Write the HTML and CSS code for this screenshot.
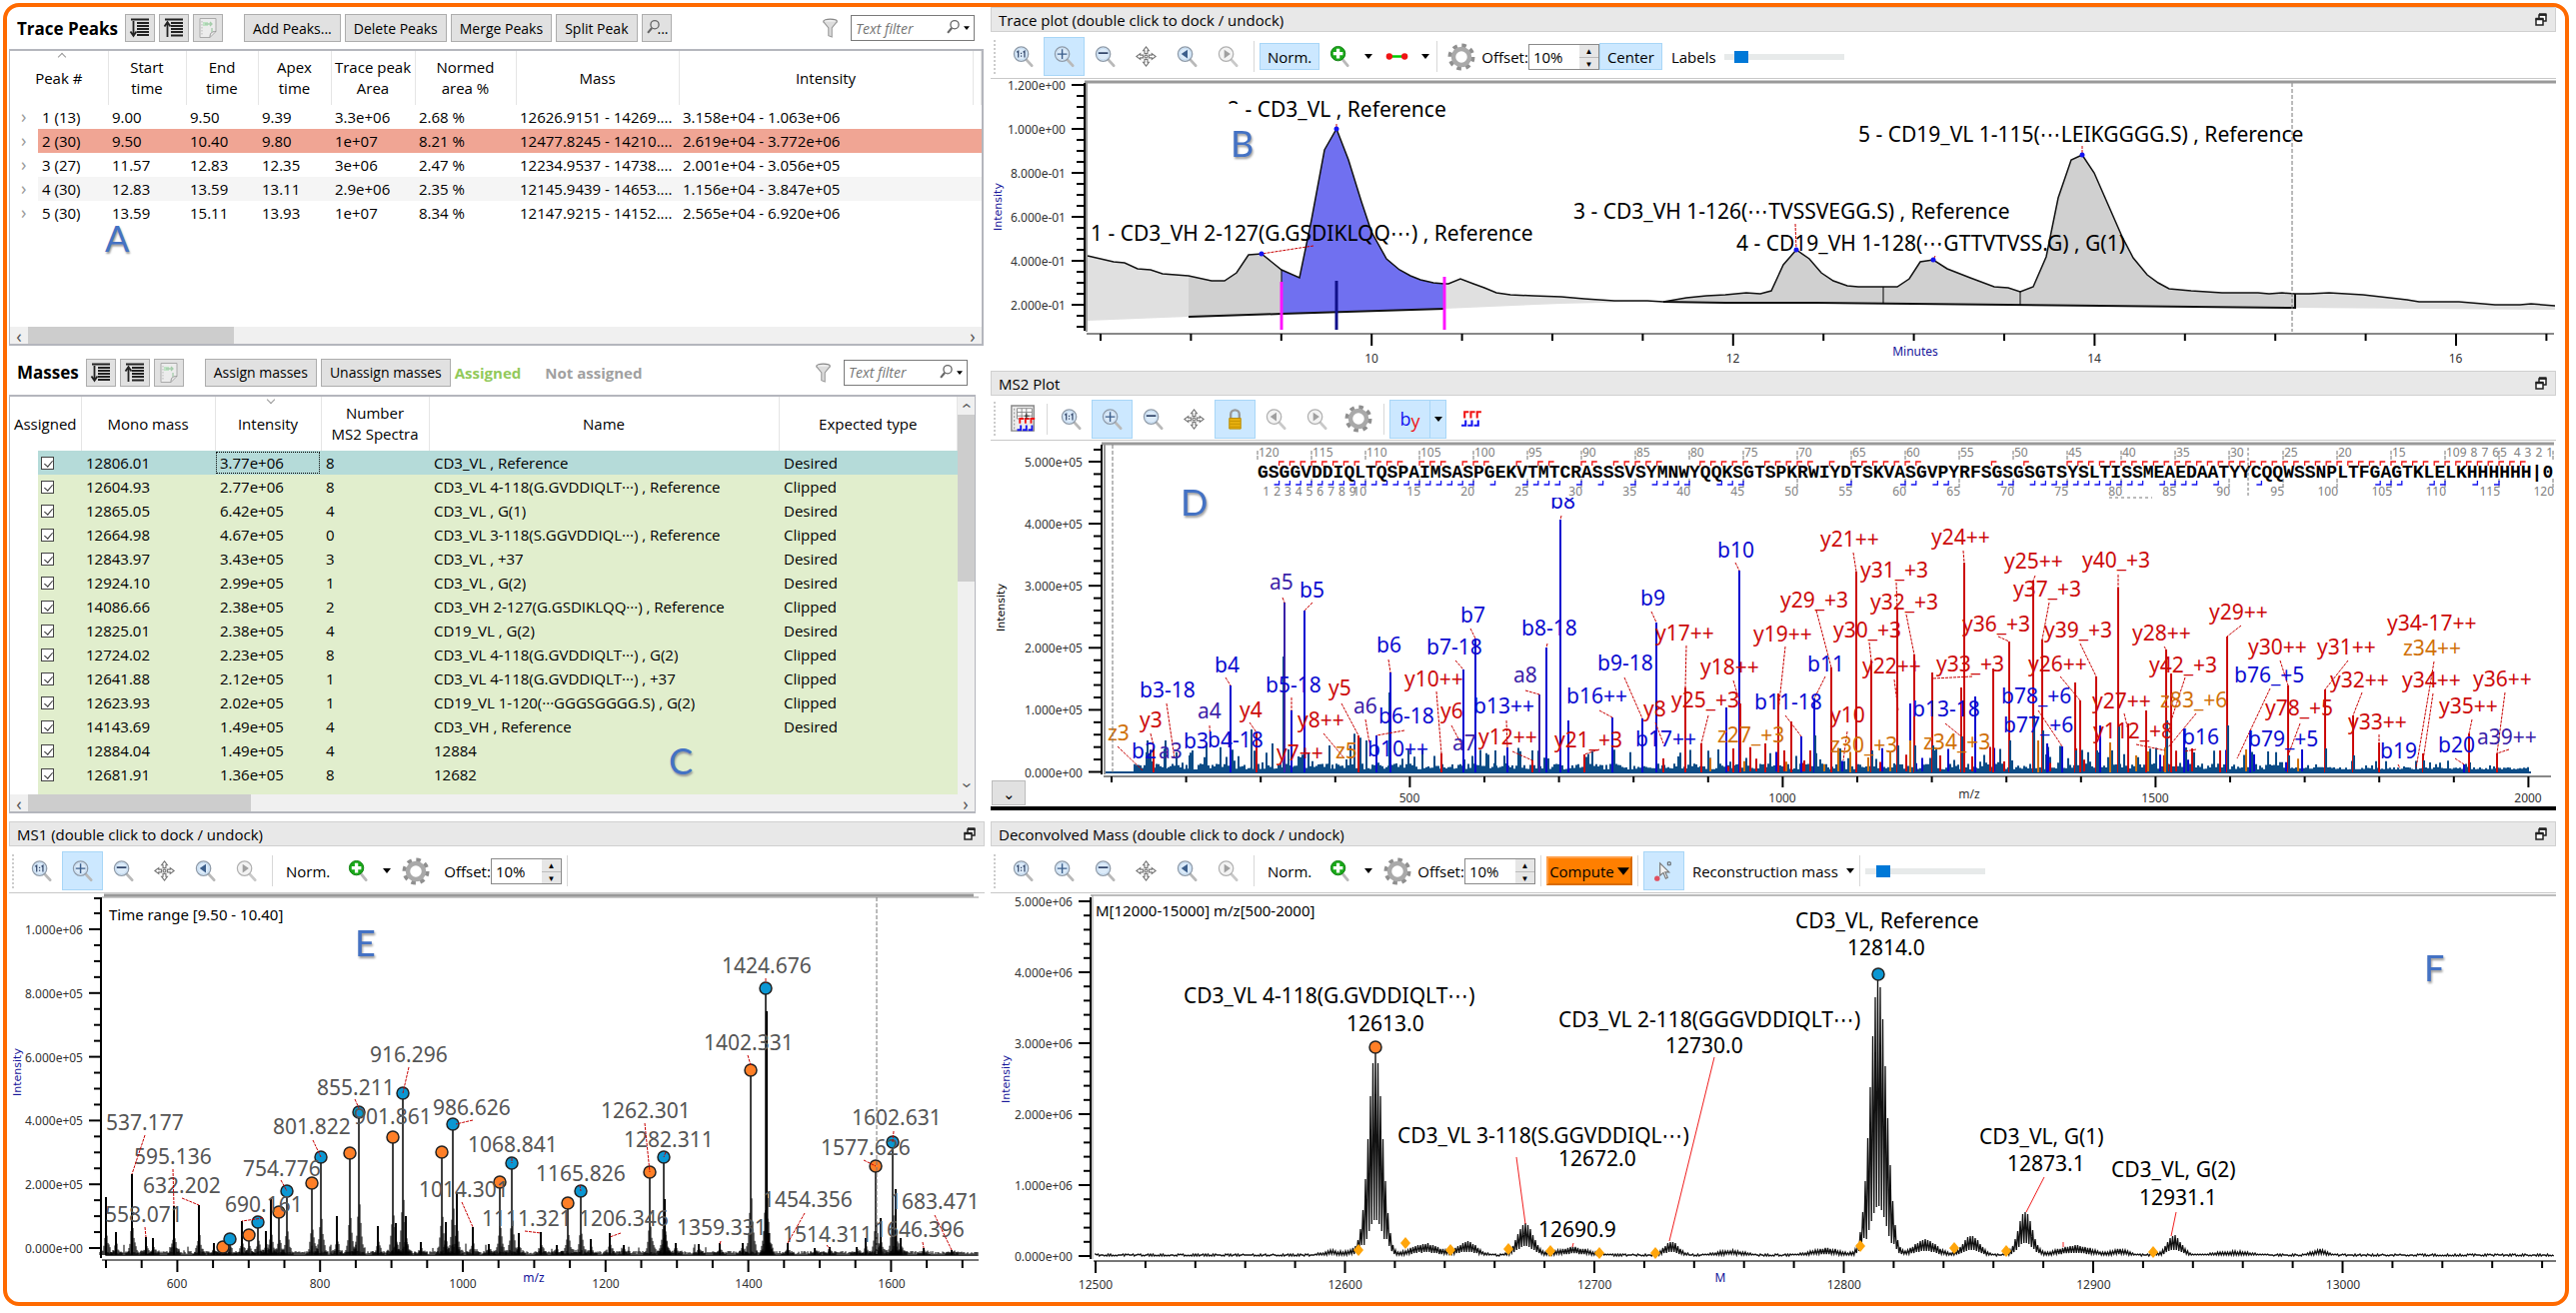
FILE: index.html
```html
<!DOCTYPE html>
<html lang="en">
<head>
    <meta charset="UTF-8">
    <meta name="viewport" content="width=device-width, initial-scale=1.0">
    <title>Peak Viewer</title>
    <link rel="stylesheet" href="styles.css">
</head>
<body>
    <svg class="defs" aria-hidden="true">
        <symbol id="lens" viewBox="0 0 24 24">
            <path d="M15.500 15.500 21 21.500" stroke="#b9b9b9" stroke-width="3" stroke-linecap="round"/>
            <circle cx="10" cy="9.500" r="7.500" fill="#dcebf9" stroke="#8e9aa8" stroke-width="1.300"/>
            <circle cx="10" cy="9.500" r="6" fill="none" stroke="#c3daf0"/>
        </symbol>
        <symbol id="lens-off" viewBox="0 0 24 24">
            <path d="M15.500 15.500 21 21.500" stroke="#c9c9c9" stroke-width="3" stroke-linecap="round"/>
            <circle cx="10" cy="9.500" r="7.500" fill="#f3f3f3" stroke="#b0b0b0" stroke-width="1.300"/>
        </symbol>
        <symbol id="one" viewBox="0 0 24 24">
            <use href="#lens"/>
            <path d="M5.500 7.500 7 6.500V13M12 7.500l1.500-1V13M10 8v1.300M10 11v1.300" fill="none" stroke="#33476b" stroke-width="1.300"/>
        </symbol>
        <symbol id="plus" viewBox="0 0 24 24">
            <use href="#lens"/>
            <path d="M5 9.500h10M10 4.500v10" stroke="#3c5f8c" stroke-width="1.500"/>
        </symbol>
        <symbol id="minus" viewBox="0 0 24 24">
            <use href="#lens"/>
            <path d="M5 8.500h10" stroke="#33476b" stroke-width="1.800"/>
        </symbol>
        <symbol id="move" viewBox="0 0 24 24">
            <g fill="#fff" stroke="#777" stroke-width="1.200">
                <path d="M12 2l3 4h-1.500v3h-3V6H9zM12 22l3-4h-1.500v-3h-3v3H9zM2 12l4-3v1.500h3v3H6V15zM22 12l-4-3v1.500h-3v3h3V15z"/>
                <circle cx="12" cy="12" r="1.500"/>
            </g>
        </symbol>
        <symbol id="prev" viewBox="0 0 24 24">
            <use href="#lens"/>
            <path d="M12.500 5v9L6 9.500z" fill="#3c5f8c"/>
        </symbol>
        <symbol id="prev-off" viewBox="0 0 24 24">
            <use href="#lens-off"/>
            <path d="M12.500 5v9L6 9.500z" fill="#a0a0a0"/>
        </symbol>
        <symbol id="next" viewBox="0 0 24 24">
            <use href="#lens-off"/>
            <path d="M8 5v9l6.500-4.500z" fill="#a0a0a0"/>
        </symbol>
        <symbol id="add" viewBox="0 0 24 24">
            <path d="M15 15.500 20 21.500" stroke="#b9b9b9" stroke-width="3" stroke-linecap="round"/>
            <circle cx="10" cy="9" r="7.500" fill="#18a818" stroke="#128012"/>
            <path d="M10 4v10M5 9h10" stroke="#fff" stroke-width="3.500"/>
        </symbol>
        <symbol id="gear" viewBox="0 0 28 28">
            <circle cx="14" cy="14" r="11.500" fill="none" stroke="#8f8f8f" stroke-width="4" stroke-dasharray="4.500 4.530"/>
            <circle cx="14" cy="14" r="8" fill="none" stroke="#a9a9a9" stroke-width="4.500"/>
        </symbol>
        <symbol id="link" viewBox="0 0 24 10">
            <path d="M3 5h18" stroke="#0c0" stroke-width="2.500"/>
            <circle cx="4" cy="5" r="3.300" fill="#f01414"/>
            <circle cx="20" cy="5" r="3.300" fill="#f01414"/>
        </symbol>
        <symbol id="lock" viewBox="0 0 24 24">
            <path d="M7.500 12V7a4.500 4.500 0 0 1 9 0v5" fill="none" stroke="#999" stroke-width="2.500"/>
            <path d="M6 11h12v11H6z" fill="#e8b010" stroke="#b98a00"/>
            <path d="M6.500 14h11M6.500 17h11M6.500 20h11" stroke="#c79400"/>
        </symbol>
        <symbol id="ions" viewBox="0 0 22 18">
            <path d="M4 8V2h4M10 8V2h4M16 8V2h4" fill="none" stroke="#f01414" stroke-width="2"/>
            <path d="M5 10v5H1M11 10v5H7M17 10v5h-4" fill="none" stroke="#1414f0" stroke-width="2"/>
        </symbol>
        <symbol id="grid" viewBox="0 0 28 30">
            <path d="M1 1h24v27H1z" fill="#ececec" stroke="#888" stroke-width="1.500"/>
            <path d="M7 4h16v11H7z" fill="#fff"/>
            <path d="M7 4h16v11H7zM7 8h16M7 12h16M12 4v11M17 4v11" fill="none" stroke="#888"/>
            <path d="M4 4v22" stroke="#888" stroke-dasharray="2 2"/>
            <path d="M10 20v-5h4M16 20v-5h4M22 20v-5h4" fill="none" stroke="#f01414" stroke-width="2"/>
            <path d="M11 22v5H7M17 22v5h-4M23 22v5h-4" fill="none" stroke="#1414f0" stroke-width="2"/>
            <path d="M17 9v6M15 12h5" stroke="#222"/>
        </symbol>
        <symbol id="down-list" viewBox="0 0 22 22">
            <path d="M2 2.500h18M8 6h12M8 9h12M8 12h12M8 15h12M8 18h12" stroke="#222" stroke-width="1.800"/>
            <path d="M4.500 4v14M1.500 14.500l3 4.500 3-4.500" fill="none" stroke="#222" stroke-width="1.800"/>
        </symbol>
        <symbol id="up-list" viewBox="0 0 22 22">
            <path d="M2 2.500h18M8 6h12M8 9h12M8 12h12M8 15h12M8 18.500h12" stroke="#222" stroke-width="1.800"/>
            <path d="M4.500 20V6M1.500 9.500 4.500 5l3 4.500" fill="none" stroke="#222" stroke-width="1.800"/>
        </symbol>
        <symbol id="sheet" viewBox="0 0 22 22">
            <path d="M3 1.500h16v13L13 20.500H3z" fill="#ececec" stroke="#aaa"/>
            <path d="M13 20.500c0-4 1-6 6-6" fill="none" stroke="#999"/>
            <path d="M6 5h5v4H6z" fill="#bfe3c4"/>
            <path d="M5 4v14" stroke="#bbb" stroke-dasharray="1.500 1.500"/>
            <path d="M8 7h7M13 5l2 2-2 2M15 11v4" fill="none" stroke="#a5cdab" stroke-width="1.300"/>
        </symbol>
        <symbol id="find" viewBox="0 0 22 22">
            <circle cx="11" cy="7" r="5" fill="none" stroke="#666" stroke-width="1.600"/>
            <path d="M7.500 11 2.500 17" stroke="#666" stroke-width="2.600"/>
        </symbol>
        <symbol id="funnel" viewBox="0 0 20 24">
            <ellipse cx="10" cy="4" rx="8" ry="2.500" fill="#eee" stroke="#888" stroke-width="1.300"/>
            <path d="M2 4.500 8 12v9l4 1.500V12l6-7.500" fill="#ddd" stroke="#999" stroke-width="1.300"/>
        </symbol>
        <symbol id="dock" viewBox="0 0 14 14">
            <path d="M5 2h7v6H5z" fill="#fff" stroke="#222" stroke-width="1.500"/>
            <path d="M5 1.500h7.500" stroke="#222" stroke-width="2.500"/>
            <path d="M2 6h7v6H2z" fill="#fff" stroke="#222" stroke-width="1.500"/>
            <path d="M1.500 6h8" stroke="#222" stroke-width="2.500"/>
        </symbol>
        <symbol id="pick" viewBox="0 0 24 24">
            <path d="M8 4v13l3.500-3 2.500 6 2-1-2.500-5.500h4z" fill="#f3f3f3" stroke="#777" stroke-width="1.200"/>
            <path d="M16 3h3v3h-3z" fill="none" stroke="#555"/>
            <circle cx="5" cy="20" r="2.800" fill="#e05060"/>
        </symbol>
        <symbol id="drop" viewBox="0 0 8 5">
            <path d="M0 0h8L4 5z"/>
        </symbol>
    </svg>

    <main class="frame">
        <div class="column">
            <section class="list">
                <span class="letter letter-a">A</span>
                <div class="list-bar">
                    <h2>Trace Peaks</h2>
                    <button class="square" aria-label="Expand"><svg><use href="#down-list"/></svg></button>
                    <button class="square" aria-label="Collapse"><svg><use href="#up-list"/></svg></button>
                    <button class="square last" aria-label="Export"><svg><use href="#sheet"/></svg></button>
                    <button>Add Peaks...</button>
                    <button>Delete Peaks</button>
                    <button>Merge Peaks</button>
                    <button>Split Peak</button>
                    <button class="square dots" aria-label="Find"><svg><use href="#find"/></svg>...</button>
                    <svg class="funnel"><use href="#funnel"/></svg>
                    <label class="filter"><input type="text" placeholder="Text filter" aria-label="Text filter"><svg><use href="#find"/></svg><svg class="tiny"><use href="#drop"/></svg></label>
                </div>
                <div class="box peaks">
                    <div class="rows">
                        <table id="peaks">
                            <colgroup><col class="w-peak"><col class="w-start"><col class="w-end"><col class="w-apex"><col class="w-area"><col class="w-norm"><col class="w-mass"><col class="w-int"><col></colgroup>
                            <thead>
                                <tr><th class="sort-up">Peak #</th><th>Start<br>time</th><th>End<br>time</th><th>Apex<br>time</th><th>Trace peak<br>Area</th><th>Normed<br>area %</th><th>Mass</th><th>Intensity</th><th></th></tr>
                            </thead>
                            <tbody></tbody>
                        </table>
                    </div>
                    <div class="hscroll"><i>‹</i><div class="track"><b></b></div><i>›</i></div>
                </div>
            </section>

            <section class="list masses">
                <span class="letter letter-c">C</span>
                <div class="list-bar">
                    <h2>Masses</h2>
                    <button class="square" aria-label="Expand"><svg><use href="#down-list"/></svg></button>
                    <button class="square" aria-label="Collapse"><svg><use href="#up-list"/></svg></button>
                    <button class="square last" aria-label="Export"><svg><use href="#sheet"/></svg></button>
                    <button>Assign masses</button>
                    <button>Unassign masses</button>
                    <span class="green">Assigned</span>
                    <span class="gray">Not assigned</span>
                    <svg class="funnel"><use href="#funnel"/></svg>
                    <label class="filter"><input type="text" placeholder="Text filter" aria-label="Text filter"><svg><use href="#find"/></svg><svg class="tiny"><use href="#drop"/></svg></label>
                </div>
                <div class="box">
                    <div class="with-scroll">
                        <table id="masses">
                            <colgroup><col class="w-check"><col class="w-mono"><col class="w-mint"><col class="w-ms2"><col class="w-name"><col></colgroup>
                            <thead>
                                <tr><th>Assigned</th><th>Mono mass</th><th class="sort-down">Intensity</th><th>Number<br>MS2 Spectra</th><th>Name</th><th>Expected type</th></tr>
                            </thead>
                            <tbody></tbody>
                        </table>
                        <div class="vscroll"><i>‹</i><div class="track"><b></b></div><i>›</i></div>
                    </div>
                    <div class="hscroll"><i>‹</i><div class="track"><b></b></div><i>›</i></div>
                </div>
            </section>
        </div>

        <div class="column">
            <section>
                <header>Trace plot (double click to dock / undock)<button aria-label="Dock"><svg><use href="#dock"/></svg></button></header>
                <div class="tools">
                    <span class="grip"></span>
                    <button aria-label="Zoom 1:1"><svg><use href="#one"/></svg></button>
                    <button class="on" aria-label="Zoom in"><svg><use href="#plus"/></svg></button>
                    <button aria-label="Zoom out"><svg><use href="#minus"/></svg></button>
                    <button aria-label="Pan"><svg><use href="#move"/></svg></button>
                    <button aria-label="Previous"><svg><use href="#prev"/></svg></button>
                    <button aria-label="Next"><svg><use href="#next"/></svg></button>
                    <span class="sep"></span>
                    <button class="text on">Norm.</button>
                    <button aria-label="Add"><svg><use href="#add"/></svg></button>
                    <button class="menu" aria-label="Add menu"><svg class="drop"><use href="#drop"/></svg></button>
                    <button aria-label="Line style"><svg><use href="#link"/></svg></button>
                    <button class="menu" aria-label="Line menu"><svg class="drop"><use href="#drop"/></svg></button>
                    <span class="sep flush"></span>
                    <button aria-label="Settings"><svg class="gear"><use href="#gear"/></svg></button>
                    <label class="offset">Offset:<span class="spin"><input type="text" value="10%"><span><i>▲</i><i>▼</i></span></span></label>
                    <button class="text on">Center</button>
                    <label class="slide">Labels<input type="range" value="10"></label>
                </div>
                <svg class="plot" id="trace" viewBox="0 0 1566 289"></svg>
            </section>

            <section class="ms2">
                <header>MS2 Plot<button aria-label="Dock"><svg><use href="#dock"/></svg></button></header>
                <div class="tools tight">
                    <span class="grip"></span>
                    <button aria-label="Table"><svg class="gear"><use href="#grid"/></svg></button>
                    <span class="sep flush"></span>
                    <button aria-label="Zoom 1:1"><svg><use href="#one"/></svg></button>
                    <button class="on" aria-label="Zoom in"><svg><use href="#plus"/></svg></button>
                    <button aria-label="Zoom out"><svg><use href="#minus"/></svg></button>
                    <button aria-label="Pan"><svg><use href="#move"/></svg></button>
                    <button class="on" aria-label="Lock"><svg><use href="#lock"/></svg></button>
                    <button aria-label="Previous"><svg><use href="#prev-off"/></svg></button>
                    <button aria-label="Next"><svg><use href="#next"/></svg></button>
                    <button aria-label="Settings"><svg class="gear"><use href="#gear"/></svg></button>
                    <span class="sep"></span>
                    <button class="on by"><b>b</b><em>y</em></button>
                    <button class="on menu split" aria-label="Ion menu"><svg class="drop"><use href="#drop"/></svg></button>
                    <button class="ions" aria-label="Ions"><svg><use href="#ions"/></svg></button>
                </div>
                <svg class="plot" id="ms2" viewBox="0 0 1566 366"></svg>
                <button class="fold" aria-label="Fold">⌄</button>
            </section>
        </div>

        <section class="ms1">
            <header>MS1 (double click to dock / undock)<button aria-label="Dock"><svg><use href="#dock"/></svg></button></header>
            <div class="tools">
                <span class="grip"></span>
                <button aria-label="Zoom 1:1"><svg><use href="#one"/></svg></button>
                <button class="on" aria-label="Zoom in"><svg><use href="#plus"/></svg></button>
                <button aria-label="Zoom out"><svg><use href="#minus"/></svg></button>
                <button aria-label="Pan"><svg><use href="#move"/></svg></button>
                <button aria-label="Previous"><svg><use href="#prev"/></svg></button>
                <button aria-label="Next"><svg><use href="#next"/></svg></button>
                <span class="sep"></span>
                <button class="text">Norm.</button>
                <button aria-label="Add"><svg><use href="#add"/></svg></button>
                <button class="menu" aria-label="Add menu"><svg class="drop"><use href="#drop"/></svg></button>
                <button aria-label="Settings"><svg class="gear"><use href="#gear"/></svg></button>
                <label class="offset">Offset:<span class="spin"><input type="text" value="10%"><span><i>▲</i><i>▼</i></span></span></label>
                <span class="sep"></span>
            </div>
            <svg class="plot" id="ms1" viewBox="0 0 976 409"></svg>
        </section>

        <section>
            <header>Deconvolved Mass (double click to dock / undock)<button aria-label="Dock"><svg><use href="#dock"/></svg></button></header>
            <div class="tools">
                <span class="grip"></span>
                <button aria-label="Zoom 1:1"><svg><use href="#one"/></svg></button>
                <button aria-label="Zoom in"><svg><use href="#plus"/></svg></button>
                <button aria-label="Zoom out"><svg><use href="#minus"/></svg></button>
                <button aria-label="Pan"><svg><use href="#move"/></svg></button>
                <button aria-label="Previous"><svg><use href="#prev"/></svg></button>
                <button aria-label="Next"><svg><use href="#next"/></svg></button>
                <span class="sep"></span>
                <button class="text">Norm.</button>
                <button aria-label="Add"><svg><use href="#add"/></svg></button>
                <button class="menu" aria-label="Add menu"><svg class="drop"><use href="#drop"/></svg></button>
                <button aria-label="Settings"><svg class="gear"><use href="#gear"/></svg></button>
                <label class="offset">Offset:<span class="spin"><input type="text" value="10%"><span><i>▲</i><i>▼</i></span></span></label>
                <span class="sep"></span>
                <button class="compute">Compute<svg><use href="#drop"/></svg></button>
                <span class="sep"></span>
                <button class="on" aria-label="Pick"><svg><use href="#pick"/></svg></button>
                <span class="pulldown"><select aria-label="Mass type"><option>Reconstruction mass</option></select><svg class="drop"><use href="#drop"/></svg></span>
                <span class="sep"></span>
                <label class="slide"><input type="range" value="10" aria-label="Label size"></label>
            </div>
            <svg class="plot" id="deconv" viewBox="0 0 1566 409"></svg>
        </section>
    </main>
    <script src="script.js"></script>
</body>
</html>
```
FILE: styles.css
```css
*{
    box-sizing: border-box;
}
body{
    margin: 0;
    background-color: white;
    font-family: "Open Sans", "Noto Sans", sans-serif;
    font-size: 15px;
    color: black;
}
button, input, select{
    font: inherit;
    color: inherit;
}
i, em{
    font-style: normal;
}
.defs{
    display: none;
}
.frame{
    margin: 3px 7px 7px 3px;
    border: 4px solid #ff6a00;
    border-radius: 16px;
    padding: 0 9px 0 2px;
    display: grid;
    grid-template-columns: 976fr 1566fr;
    gap: 8px 6px;
    overflow: hidden;
}
.frame>*{
    min-width: 0;
}

/* lists */
.list{
    position: relative;
}
.list-bar{
    display: flex;
    align-items: center;
    gap: 4px;
    height: 42px;
    padding: 0 10px 0 8px;
}
.masses .list-bar{
    height: 49px;
    padding: 4px 17px 0 8px;
}
.list-bar h2{
    margin: 0 3px 0 0;
    font-size: 17px;
}
.list-bar button{
    height: 28px;
    padding: 0 8px;
    font-size: 14px;
    border: 1px solid #adadad;
    background-color: #e1e1e1;
    white-space: nowrap;
}
.list-bar .square{
    width: 30px;
    padding: 0 3px;
    display: flex;
    align-items: center;
}
.square svg{
    width: 22px;
    height: 22px;
}
.list-bar .last{
    margin-right: 17px;
}
.dots svg{
    flex: none;
    width: 18px;
    margin-right: -6px;
}
.green, .gray{
    font-weight: bold;
    color: #92c95a;
}
.gray{
    color: #a0a0a0;
    margin-left: 20px;
}
.funnel{
    width: 17px;
    height: 22px;
    margin-left: auto;
    margin-right: 8px;
}
.filter{
    display: flex;
    align-items: center;
    width: 124px;
    height: 26px;
    border: 1px solid #7a7a7a;
    padding: 0 4px;
}
.filter input{
    width: 90px;
    border: 0;
    padding: 0;
    font-size: 14px;
    font-style: italic;
    outline: none;
}
.filter input::placeholder{
    color: #757575;
}
.filter svg{
    width: 18px;
    height: 18px;
    flex: none;
}
.filter .tiny{
    width: 6px;
    height: 4px;
}
.box{
    border: 2px solid #b4b6bd;
    border-left-width: 1px;
    margin-right: 1px;
}
.masses .box{
    margin-right: 9px;
    border-right-width: 1px;
}
.rows{
    min-height: 276px;
}
table{
    width: 100%;
    table-layout: fixed;
    border-collapse: collapse;
}
th{
    height: 54px;
    padding: 0;
    font-weight: normal;
    line-height: 21px;
    border-right: 1px solid #e5e5e5;
    position: relative;
}
td{
    height: 24px;
    padding: 0 4px;
    line-height: 22px;
    white-space: nowrap;
    overflow: hidden;
}
td:first-child{
    padding-left: 32px;
    position: relative;
}
.w-peak{ width: 98px; }
.w-start{ width: 78px; }
.w-end{ width: 72px; }
.w-apex{ width: 73px; }
.w-area{ width: 84px; }
.w-norm{ width: 101px; }
.w-mass{ width: 163px; }
.w-int{ width: 294px; }
.w-check{ width: 71px; }
.w-mono{ width: 134px; }
.w-mint{ width: 106px; }
.w-ms2{ width: 108px; }
.w-name{ width: 350px; }
.sort-up::before, .sort-down::before{
    content: "";
    position: absolute;
    left: 50%;
    top: 3px;
    width: 5px;
    height: 5px;
    border: solid #999;
    border-width: 1px 0 0 1px;
    transform: rotate(45deg);
}
.sort-down::before{
    top: 0;
    transform: rotate(225deg);
}
#peaks th, #peaks .plain{
    background-color: white;
}
.red{
    background: linear-gradient(to right, white 28px, #f0a594 28px);
}
.pale{
    background: linear-gradient(to right, white 28px, #f5f5f5 28px);
}
.chev{
    position: absolute;
    left: 11px;
    top: 0;
    font-size: 18px;
    color: #999;
}
#masses td{
    padding-left: 5px;
}
#masses td:first-child{
    padding-left: 31px;
}
#masses tbody tr{
    background: linear-gradient(to right, white 28px, #e1eecd 28px);
}
#masses tbody .picked{
    background: linear-gradient(to right, white 28px, #b5dbd9 28px);
}
.focus{
    outline: 1px dotted black;
    outline-offset: -2px;
}
input[type=checkbox]{
    appearance: none;
    display: block;
    width: 13px;
    height: 13px;
    margin: 0;
    border: 1px solid #444;
    background-color: white;
}
input[type=checkbox]:checked::before{
    content: "";
    display: block;
    width: 4px;
    height: 7px;
    margin: 1px 0 0 4px;
    border: solid #333;
    border-width: 0 1px 1px 0;
    transform: rotate(40deg);
}
.with-scroll{
    display: flex;
}
.with-scroll table{
    flex: 1;
    margin-bottom: 8px;
    box-shadow: 28px 8px 0 #e1eecd;
    clip-path: inset(0 0 -8px 0);
}
.hscroll, .vscroll{
    display: flex;
    align-items: center;
    height: 17px;
    background-color: #f0f0f0;
    color: #555;
}
.hscroll i, .vscroll i{
    width: 18px;
    line-height: 14px;
    font-size: 18px;
    text-align: center;
}
.track{
    flex: 1;
    height: 100%;
}
.track b{
    display: block;
    width: 22%;
    height: 100%;
    background-color: #cdcdcd;
}
.masses .hscroll .track b{
    width: 24%;
}
.vscroll{
    flex-direction: column;
    width: 17px;
    height: auto;
}
.vscroll i{
    height: 18px;
    transform: rotate(90deg);
}
.vscroll .track{
    width: 100%;
}
.masses .vscroll .track b{
    width: 100%;
    height: 46%;
}
.letter{
    position: absolute;
    z-index: 1;
    font-family: Lato, sans-serif;
    font-size: 36px;
    line-height: 30px;
    color: #4472c4;
    text-shadow: 1px 2px 2px #999;
}
.letter-a{
    left: 96px;
    top: 216px;
}
.letter-c{
    left: 660px;
    top: 400px;
}

/* plot panels */
header{
    display: flex;
    justify-content: space-between;
    align-items: center;
    height: 25px;
    padding: 0 7px;
    background-color: #e8e8e8;
    border: 1px solid #d0d0d0;
}
header button{
    border: 0;
    padding: 0;
    background: none;
    display: flex;
}
header svg{
    width: 14px;
    height: 14px;
}
.tools{
    display: flex;
    align-items: center;
    height: 47px;
    padding-top: 3px;
    border-bottom: 1px solid #c8c8c8;
}
.tools.tight{
    height: 45px;
    padding-top: 2px;
}
.tools button{
    flex: none;
    display: flex;
    align-items: center;
    justify-content: center;
    width: 41px;
    height: 39px;
    padding: 0;
    border: 1px solid transparent;
    background: none;
}
.tools button.on{
    background-color: #cce8ff;
    border-color: #a8d6f7;
}
.tools svg{
    width: 23px;
    height: 23px;
}
.tools .gear{
    width: 28px;
    height: 28px;
}
.tools .drop{
    width: 8px;
    height: 5px;
}
.tools .text{
    width: auto;
    height: 27px;
    padding: 0 7px;
}
.tools .menu{
    width: 16px;
}
.tools .split{
    width: 17px;
    margin-left: -1px;
}
.tools .ions{
    width: 50px;
}
.tools .by{
    font-size: 18px;
    color: #1414f0;
}
.by b{
    font-weight: normal;
}
.by em{
    color: #f01414;
    padding-top: 4px;
}
.grip{
    width: 4px;
    height: 34px;
    margin: 0 5px 0 3px;
    border-left: 2px dotted #ccc;
}
.sep{
    width: 1px;
    height: 31px;
    margin: 0 5px;
    background-color: #d8d8d8;
}
.sep.flush{
    margin: 0 3px;
}
.offset, .slide{
    display: flex;
    align-items: center;
}
.ms1 .offset{
    padding-left: 8px;
}
.spin{
    display: flex;
    width: 71px;
    height: 26px;
    border: 1px solid #8a8a8a;
}
.spin input{
    width: 50px;
    border: 0;
    padding: 0 4px;
    outline: none;
}
.spin span{
    width: 19px;
    background-color: #e6e6e6;
}
.spin i{
    display: block;
    height: 12px;
    font-size: 8px;
    line-height: 12px;
    text-align: center;
}
.spin i+i{
    border-top: 1px solid #bbb;
}
.slide{
    padding-left: 9px;
    gap: 8px;
}
.sep+.slide{
    padding-left: 0;
}
input[type=range]{
    appearance: none;
    width: 120px;
    height: 12px;
    margin: 0;
    background: linear-gradient(#e7eaea, #e7eaea) center/100% 6px no-repeat;
}
input[type=range]::-webkit-slider-thumb{
    appearance: none;
    width: 14px;
    height: 12px;
    background-color: #0078d7;
}
.tools .compute{
    width: 86px;
    height: 29px;
    gap: 3px;
    background-color: #ff7f00;
    border: 2px solid #ff9a3c;
    border-color: #ffa04a #d96c00 #d96c00 #ffa04a;
}
.compute svg{
    width: 12px;
    height: 8px;
}
.pulldown{
    display: flex;
    align-items: center;
    padding-left: 8px;
    gap: 8px;
}
.pulldown select{
    appearance: none;
    border: 0;
    padding: 0;
    background: none;
}
.plot{
    display: block;
    width: 100%;
    height: auto;
    overflow: visible;
    font-family: "Noto Sans", "DejaVu Sans", sans-serif;
}
.ms2{
    margin-top: 3px;
    position: relative;
    border-bottom: 4px solid black;
}
.fold{
    position: absolute;
    left: 1px;
    bottom: 1px;
    width: 34px;
    height: 25px;
    padding: 0;
    line-height: 10px;
    border: 1px solid #bbb;
    background-color: #e1e1e1;
}
.tick{
    font-size: 12px;
    fill: #333;
}
.side{
    font-family: "DejaVu Sans", sans-serif;
    font-size: 11px;
}
.name{
    font-size: 21px;
}
.note{
    font-size: 15px;
}
.big{
    font-family: Lato, sans-serif;
    font-size: 36px;
    fill: #4472c4;
    filter: drop-shadow(1px 2px 1px #999);
}
.seq{
    font-family: "Liberation Mono", monospace;
    font-weight: bold;
    font-size: 18px;
}
.num{
    font-size: 12px;
    fill: #808080;
}
```
FILE: script.js
```js
let peaks = [
    ["1 (13)", "9.00", "9.50", "9.39", "3.3e+06", "2.68 %", "12626.9151 - 14269....", "3.158e+04 - 1.063e+06"],
    ["2 (30)", "9.50", "10.40", "9.80", "1e+07", "8.21 %", "12477.8245 - 14210....", "2.619e+04 - 3.772e+06"],
    ["3 (27)", "11.57", "12.83", "12.35", "3e+06", "2.47 %", "12234.9537 - 14738....", "2.001e+04 - 3.056e+05"],
    ["4 (30)", "12.83", "13.59", "13.11", "2.9e+06", "2.35 %", "12145.9439 - 14653....", "1.156e+04 - 3.847e+05"],
    ["5 (30)", "13.59", "15.11", "13.93", "1e+07", "8.34 %", "12147.9215 - 14152....", "2.565e+04 - 6.920e+06"]
]
let look = ["plain", "red", "plain", "pale", "plain"]
peaks.forEach((row, i) => {
    let tr = document.createElement("tr")
    tr.className = look[i]
    tr.innerHTML = row.map((t, c) => "<td>" + (c == 0 ? '<span class="chev">›</span>' : "") + t + "</td>").join("") + "<td></td>"
    document.querySelector("#peaks tbody").append(tr)
})

let masses = [
    ["12806.01", "3.77e+06", 8, "CD3_VL , Reference", "Desired"],
    ["12604.93", "2.77e+06", 8, "CD3_VL 4-118(G.GVDDIQLT···) , Reference", "Clipped"],
    ["12865.05", "6.42e+05", 4, "CD3_VL , G(1)", "Desired"],
    ["12664.98", "4.67e+05", 0, "CD3_VL 3-118(S.GGVDDIQL···) , Reference", "Clipped"],
    ["12843.97", "3.43e+05", 3, "CD3_VL , +37", "Desired"],
    ["12924.10", "2.99e+05", 1, "CD3_VL , G(2)", "Desired"],
    ["14086.66", "2.38e+05", 2, "CD3_VH 2-127(G.GSDIKLQQ···) , Reference", "Clipped"],
    ["12825.01", "2.38e+05", 4, "CD19_VL , G(2)", "Desired"],
    ["12724.02", "2.23e+05", 8, "CD3_VL 4-118(G.GVDDIQLT···) , G(2)", "Clipped"],
    ["12641.88", "2.12e+05", 1, "CD3_VL 4-118(G.GVDDIQLT···) , +37", "Clipped"],
    ["12623.93", "2.02e+05", 1, "CD19_VL 1-120(···GGGSGGGG.S) , G(2)", "Clipped"],
    ["14143.69", "1.49e+05", 4, "CD3_VH , Reference", "Desired"],
    ["12884.04", "1.49e+05", 4, "12884", ""],
    ["12681.91", "1.36e+05", 8, "12682", ""]
]
masses.forEach((row, i) => {
    let tr = document.createElement("tr")
    if (i == 0) tr.className = "picked"
    tr.innerHTML = '<td><input type="checkbox" checked aria-label="Assigned ' + row[0] + '"></td>' +
        row.map((t, c) => (i == 0 && c == 1 ? '<td class="focus">' : "<td>") + t + "</td>").join("")
    document.querySelector("#masses tbody").append(tr)
})

// drawing helpers
function add(svg, tag, attrs, text) {
    let el = document.createElementNS("http://www.w3.org/2000/svg", tag)
    for (let k in attrs) el.setAttribute(k, attrs[k])
    if (text !== undefined) el.textContent = text
    svg.append(el)
    return el
}
function line(svg, x1, y1, x2, y2, color, width, dash) {
    add(svg, "path", { d: `M${x1} ${y1}L${x2} ${y2}`, stroke: color || "black", "stroke-width": width || 1, "stroke-dasharray": dash || "none" })
}
function text(svg, x, y, str, cls, color, anchor) {
    let a = { x: x, y: y, class: cls }
    if (color) a.fill = color
    if (anchor) a["text-anchor"] = anchor
    return add(svg, "text", a, str)
}
function leaders(svg, list) {
    list.forEach(l => line(svg, l[0], l[1], l[2], l[3], "#c80000", 1, "3 1"))
}
function side(svg, x, y, color) {
    add(svg, "text", { class: "side", "text-anchor": "middle", fill: color, transform: `translate(${x} ${y}) rotate(-90)` }, "Intensity")
}
function yAxis(svg, x, labels, top, step, parts, extra) {
    labels.forEach((l, i) => {
        let y = top + i * step
        line(svg, x - 12, y, x, y, "black", 2)
        text(svg, x - 18, y + 5, l, "tick", null, "end")
        if (i < labels.length - 1) for (let k = 1; k < parts; k++) line(svg, x - 7, y + k * step / parts, x, y + k * step / parts, "black", 2)
    })
    extra.forEach(y => line(svg, x - 7, y, x, y, "black", 2))
}
function xAxis(svg, y, from, to, step, isMajor, major, minor) {
    for (let i = 0; from + i * step <= to; i++) {
        let x = from + i * step
        line(svg, x, y, x, y + (isMajor(i) ? major : minor), "black", 2)
    }
}
// repeatable noise
let seed = 7
function rnd() {
    seed = (seed * 16807) % 2147483647
    return seed / 2147483647
}
let navy = "#14149a"

// trace plot
let svg = document.querySelector("#trace")
let curve = [[97,177],[123,183],[134,184],[147,190],[160,191],[172,195],[198,197],[221,202],[234,202],[246,194],[258,176],[271,175],[281,183],[291,191],[309,199],[321,141],[334,71],[346,50],[358,81],[371,123],[381,153],[396,180],[409,191],[420,197],[430,201],[443,204],[454,205],[458,205],[470,200],[483,205],[494,209],[506,214],[520,216],[543,217],[571,218],[594,220],[624,222],[657,222],[673,223],[696,219],[716,217],[735,216],[756,214],[770,215],[781,212],[793,186],[806,171],[819,180],[831,194],[843,202],[857,207],[868,208],[907,208],[919,200],[930,183],[943,181],[957,190],[980,199],[1004,208],[1018,209],[1030,213],[1043,208],[1056,178],[1068,119],[1081,81],[1092,76],[1104,94],[1118,126],[1132,158],[1143,179],[1157,196],[1168,204],[1179,210],[1201,212],[1232,214],[1268,214],[1279,215],[1292,214],[1305,215],[1319,215],[1339,214],[1373,216],[1417,221],[1429,223],[1469,223],[1505,226],[1530,226],[1541,225],[1565,227]]
function area(from, to, base, color) {
    let pts = curve.filter(p => p[0] >= from && p[0] <= to).concat(base)
    add(svg, "polygon", { points: pts.join(" "), fill: color })
}
area(97, 1565, [[1565,231],[1305,229],[735,224],[652,223],[571,225],[454,230],[198,238],[97,242]], "#e0e0e0")
area(198, 291, [[291,235],[198,238]], "#d0d0d0")
area(291, 454, [[454,230],[291,235]], "#7070f0")
area(673, 1305, [[1305,229],[1018,226],[735,224]], "#d0d0d0")
add(svg, "polyline", { points: curve.join(" "), fill: "none", stroke: "#111", "stroke-width": 1.5 })
add(svg, "polyline", { points: "198,238 291,235 454,230", fill: "none", stroke: "#111", "stroke-width": 2 })
add(svg, "polyline", { points: "673,223 735,224 827,224 1018,226 1305,229 1305,215", fill: "none", stroke: "#111", "stroke-width": 2 })
line(svg, 893, 208, 893, 225)
line(svg, 1030, 213, 1030, 226)
line(svg, 291, 191, 291, 235)
line(svg, 291, 203, 291, 251, "#ff14ff", 3)
line(svg, 454, 198, 454, 251, "#ff14ff", 3)
line(svg, 346, 202, 346, 251, "#10108a", 3)
line(svg, 1302, 4, 1302, 253, "#777", 1, "4 2")
line(svg, 94, 3, 1566, 3, "#999", 3)
line(svg, 96, 2, 96, 253, "#999", 2)
line(svg, 94, 4, 94, 252, "black", 2)
line(svg, 96, 255, 1564, 255, "#888", 2)
yAxis(svg, 93, ["1.200e+00", "1.000e+00", "8.000e-01", "6.000e-01", "4.000e-01", "2.000e-01"], 6, 44, 4, [237, 248])
xAxis(svg, 255, 110, 1566, 90.4, i => i % 4 == 3, 12, 7)
;["10", "12", "14", "16"].forEach((t, i) => text(svg, 381 + i * 361.5, 284, t, "tick", null, "middle"))
text(svg, 925, 277, "Minutes", "tick", null, "middle").style.fill = navy
side(svg, 11, 128, navy)
text(svg, 237, 38, "2 - CD3_VL , Reference", "name")
add(svg, "rect", { x: 235, y: 25, width: 15, height: 15, fill: "white" })
text(svg, 100, 162, "1 - CD3_VH 2-127(G.GSDIKLQQ⋯) , Reference", "name")
text(svg, 583, 140, "3 - CD3_VH 1-126(⋯TVSSVEGG.S) , Reference", "name")
text(svg, 746, 172, "4 - CD19_VH 1-128(⋯GTTVTVSS.G) , G(1)", "name")
text(svg, 868, 63, "5 - CD19_VL 1-115(⋯LEIKGGGG.S) , Reference", "name")
leaders(svg, [[323,167,271,175],[346,45,346,50],[805,145,806,171],[945,177,943,181],[1092,67,1092,76]])
;[[271,175],[346,50],[806,171],[943,181],[1092,76]].forEach(p => add(svg, "circle", { cx: p[0], cy: p[1], r: 2.5, fill: "#1414f0" }))
text(svg, 240, 78, "B", "big")

// MS2 plot
svg = document.querySelector("#ms2")
let colors = { b: "#0a0ad0", y: "#cc0a0a", a: "#3a22a8", z: "#d07008", n: "#0c4c86" }
for (let x = 144; x < 1540; x += 2) {
    let fade = x < 1300 ? 1 : 0.4
    let h = 3 + rnd() * 6 * fade + (rnd() > 0.8 ? rnd() * 18 * fade : 0) + (x < 560 && rnd() > 0.9 ? rnd() * 36 : 0)
    line(svg, x, 332, x, 332 - h, colors.n, 2)
    if (x > 700 && x < 1320 && rnd() > 0.84) line(svg, x, 332, x, 332 - 6 - rnd() * 22, ["#cc0a0a", "#d07008", "#0a0ad0"][Math.floor(rnd() * 3)], 2)
}
line(svg, 113, 332, 1541, 332, colors.n, 2)
let ms2Peaks = "n157,300 n175,300 n199,315 n240,305 n261,289 n293,216 n399,252 n376,300 n339,305 n505,310 n570,260 b240,245 a294,162 b314,170 b301,270 b400,232 b485,198 b473,229 b570,79 b556,207 a549,254 b578,280 b666,182 b652,278 b622,277 b749,130 b736,267 y695,247 y266,292 y368,295 b386,295 y163,305 y451,313 b517,307 y542,320 y594,314 y711,303 y750,263 y673,318 y788,253 y775,303 y743,308 y801,281 b811,296 b824,258 y841,227 y866,131 y881,220 y907,168 b920,263 y924,214 y942,232 y971,247 y974,122 b985,256 y1003,228 y1019,201 y1043,140 y1052,199 b1057,303 b1072,306 y1085,242 y1090,260 y1106,236 b1110,285 y1128,147 y1138,283 y1156,270 y1176,209 y1181,233 z1175,307 b1194,288 y1237,196 y1230,310 y1298,245 b1260,290 y1335,249 y1363,275 y1389,302 y1433,313 y1479,293 y1507,313 b1474,324 n825,295 n908,305 n943,305 n972,296 n1020,300 n1044,275 n1053,290 n1086,310 n1107,310 n1129,285 n1177,280 n1238,285 n1336,308 n1299,315 n882,310 n925,305 n1364,315 n1434,320 z920,300 z1120,302 z1048,300 z860,315"
ms2Peaks.split(" ").forEach(p => {
    let xy = p.slice(1).split(",")
    line(svg, xy[0], 332, xy[0], xy[1], colors[p[0]], 2)
})
leaders(svg, [[127,306,152,330],[160,293,163,305],[176,263,184,318],[235,237,240,245],[219,285,220,305],[259,282,266,292],[292,157,294,162],[322,162,314,170],[301,257,301,270],[351,263,368,295],[333,293,354,318],[375,279,379,303],[398,219,400,232],[414,290,386,295],[480,188,485,198],[465,220,473,229],[446,251,451,313],[461,285,470,302],[535,250,549,254],[571,75,570,79],[557,203,556,207],[661,171,666,182],[634,237,652,278],[516,280,517,307],[609,270,622,277],[522,311,542,320],[696,205,695,247],[743,240,750,263],[718,275,711,303],[665,282,673,303],[745,122,749,130],[609,309,594,314],[795,206,788,271],[826,170,841,227],[835,236,824,258],[863,112,866,131],[906,142,907,168],[879,202,881,220],[904,239,908,270],[916,174,924,214],[973,110,974,122],[982,236,942,238],[955,283,971,296],[795,275,811,296],[857,291,853,320],[1008,196,1019,201],[1045,135,1043,140],[1059,162,1052,199],[1128,134,1128,147],[1090,203,1106,236],[1070,236,1090,260],[1048,270,1072,306],[1134,273,1138,290],[1206,273,1178,307],[1146,304,1175,310],[1174,206,1176,209],[1195,237,1181,280],[1206,309,1194,311],[1251,185,1237,196],[1290,220,1298,245],[1280,248,1247,318],[1358,220,1335,249],[1372,252,1363,275],[1310,283,1298,315],[1444,221,1426,328],[1443,253,1433,320],[1515,252,1507,313],[1389,294,1389,302],[1482,279,1479,293],[1465,318,1474,324],[1408,324,1410,328],[1519,309,1507,313]])
let ms2Labels = "z3 117,300 b2 141,318 y3 149,287 a3 168,318 b3 193,308 b3-18 149,257 a4 207,278 b4 224,232 b4-18 217,307 y4 249,277 a5 279,149 b5 309,157 b5-18 275,252 y5 338,255 y7++ 286,320 y8++ 307,287 z5 345,318 a6 363,273 b6 386,212 b6-18 388,283 b7 470,182 b7-18 436,214 b10++ 377,316 y10++ 414,246 y6 450,278 a7 462,310 a8 523,242 b8 560,68 b8-18 531,195 b9 650,165 b9-18 607,230 b13++ 483,273 b16++ 576,263 y12++ 488,304 b10 727,117 y17++ 665,200 y18++ 710,234 y25_+3 681,267 y8 653,276 y21_+3 564,307 b17++ 645,306 z27_+3 727,302 y19++ 763,201 b11-18 764,269 y29_+3 790,167 y21++ 830,106 y31_+3 870,137 b11 817,231 y30_+3 843,197 y22++ 872,233 y32_+3 880,169 y24++ 941,104 y33_+3 946,231 y10 840,282 b13-18 922,276 z30_+3 840,312 z34_+3 933,309 y36_+3 972,191 y25++ 1014,128 y37_+3 1023,156 y40_+3 1092,127 y39_+3 1054,197 y26++ 1038,231 b78_+6 1011,263 b77_+6 1013,292 y27++ 1102,268 z83_+6 1170,267 y112_+8 1103,298 b16 1192,304 y28++ 1142,200 y42_+3 1159,232 y29++ 1219,179 y30++ 1258,214 y31++ 1327,214 b76_+5 1244,242 y78_+5 1275,275 b79_+5 1258,306 y34-17++ 1397,190 z34++ 1413,215 y32++ 1340,247 y34++ 1412,247 y36++ 1483,246 y33++ 1358,289 y35++ 1449,273 b19 1390,318 b20 1448,312 a39++ 1487,304".split(" ")
for (let i = 0; i < ms2Labels.length; i += 2) {
    let xy = ms2Labels[i + 1].split(",")
    text(svg, xy[0], xy[1], ms2Labels[i], "name", colors[ms2Labels[i][0]])
}
line(svg, 111, 3, 1564, 3, "#999", 3)
line(svg, 114, 2, 114, 334, "#999", 2)
line(svg, 111, 4, 111, 334, "black", 2)
line(svg, 113, 336, 1561, 336, "#888", 2)
line(svg, 122, 4, 122, 332, "#777", 1, "4 2")
yAxis(svg, 110, ["5.000e+05", "4.000e+05", "3.000e+05", "2.000e+05", "1.000e+05", "0.000e+00"], 21, 62.1, 5, [9])
xAxis(svg, 336, 121, 1545, 74.6, i => i % 5 == 4, 11, 6)
;["500", "1000", "1500", "2000"].forEach((t, i) => text(svg, 419 + i * 373, 362, t, "tick", null, "middle"))
text(svg, 979, 358, "m/z", "tick", null, "middle")
side(svg, 14, 167, "black")
// sequence strip, one cell is 10.8 wide
add(svg, "rect", { x: 265, y: 8, width: 1300, height: 49, fill: "white" })
function cell(k) { return 267 + k * 10.8 }
for (let k = 0; k <= 120; k += 5) {
    line(svg, cell(k), 10, cell(k), 20, "#777", 1, "4 1")
    if (k > 0) line(svg, cell(k), 38, cell(k), 47, "#777", 1, "4 1")
    text(svg, cell(k) + 1, 16, k == 110 ? "10" : k == 115 ? "5" : k == 120 ? "" : 120 - k, "num")
    if (k > 5) text(svg, cell(k) + 1, 55, k, "num", null, "end")
}
for (let k = 111; k < 120; k++) if (k != 115) text(svg, cell(k) + 4, 16, 120 - k, "num")
for (let k = 1; k < 10; k++) text(svg, cell(k) - 2, 55, k, "num", null, "middle")
text(svg, 267, 37, "GSGGVDDIQLTQSPAIMSASPGEKVTMTCRASSSVSYMNWYQQKSGTSPKRWIYDTSKVASGVPYRFSGSGSGTSYSLTISSMEAEDAATYYCQQWSSNPLTFGAGTKLELKHHHHHH|0", "seq")
let top1 = [2,3,4,5,6,7,8,9,11,12,13,15,16,17,19,20,21,24,26,27,30,31,33,34,35,36,37,41,42,43,44,45,47,48,49,50,51,53,55,56,57,58,59,60,61,68,71]
for (let k = 75; k < 118; k++) top1.push(k)
let bottom1 = [2,3,4,5,6,7,8,9,10,11,12,13,14,15,16,17,18,19,20,22,25,26,27,28,30,32,35,37,38,39,40,43,44,45,55,60,61,63,64,69,70,72,73,74,75,76,77,78,79,80,81,82,84,85,86,87,89,93,104,105,106,109,110,113,115]
top1.forEach(k => add(svg, "path", { d: `M${cell(k)} 25v-4h5`, fill: "none", stroke: "#f01414", "stroke-width": 1.3 }))
bottom1.forEach(k => add(svg, "path", { d: `M${cell(k) - 5} 44h5v-4`, fill: "none", stroke: "#1414f0", "stroke-width": 1.3 }))
line(svg, 1258, 7, 1258, 57, "#777", 1, "3 2")
line(svg, 1119, 57, 1162, 57, "#777", 1, "3 3")
text(svg, 190, 75, "D", "big")

// MS1 plot
svg = document.querySelector("#ms1")
let blue = [[221,346],[249,329],[278,298],[312,264],[350,219],[394,200],[444,231],[503,270],[572,298],[655,264],[757,95],[884,249]]
let orange = [[214,354],[240,342],[270,319],[303,290],[341,260],[384,244],[433,259],[491,289],[559,310],[641,279],[742,177],[867,273]]
let others = [[97,304],[123,281],[107,339],[137,344],[144,345],[165,313],[190,312],[205,350],[233,328],[262,306],[257,338],[328,323],[369,333],[387,330],[397,323],[412,349],[464,334],[437,329],[448,300],[480,351],[532,339],[548,352],[582,346],[601,340],[615,352],[690,351],[711,350],[734,350],[760,340],[779,350],[806,355],[821,354],[848,354],[857,345],[872,325],[887,296],[892,345],[915,355],[943,357],[656,306],[667,350],[758,118],[510,340]]
for (let x = 97; x < 970; x += 1) {
    line(svg, x, 363, x, 361 - rnd() * 3 - (x < 700 && rnd() > 0.9 ? rnd() * 8 : 0), "black", 1)
}
blue.concat(orange, others).forEach(p => {
    line(svg, p[0], 362, p[0], p[1], "black", others.includes(p) ? 2 : 1.5)
    let h = Math.min(362 - p[1], 160)
    for (let d = 1; d < 7; d++) {
        line(svg, p[0] + d, 362, p[0] + d, 362 - h * 0.55 * Math.exp(-d / 2) - rnd() * 4, "black", 1)
        line(svg, p[0] - d, 362, p[0] - d, 362 - h * 0.5 * Math.exp(-d / 1.5) - rnd() * 4, "black", 1)
    }
})
let ms1Labels = "537.177 97,237 595.136 125,271 632.202 134,300 558.071 96,329 690.161 216,319 754.776 234,283 801.822 264,241 855.211 308,202 901.861 345,231 916.296 361,169 986.626 424,222 1014.301 410,304 1068.841 459,259 1165.826 527,288 1111.321 473,333 1206.346 570,333 1262.301 592,225 1282.311 615,254 1402.331 695,157 1424.676 713,80 1359.331 668,342 1454.356 754,314 1514.311 774,349 1577.626 812,262 1602.631 843,232 1683.471 881,316 1646.396 866,344".split(" ")
orange.forEach(p => add(svg, "circle", { cx: p[0], cy: p[1], r: 6, fill: "#ff7f27", stroke: "#222", "stroke-width": 1.5 }))
blue.forEach(p => add(svg, "circle", { cx: p[0], cy: p[1], r: 6, fill: "#0b97d3", stroke: "#222", "stroke-width": 1.5 }))
for (let i = 0; i < ms1Labels.length; i += 2) {
    let xy = ms1Labels[i + 1].split(",")
    text(svg, xy[0], xy[1], ms1Labels[i], "name", "#555")
}
leaders(svg, [[136,242,123,281],[164,276,165,313],[173,305,190,312],[136,334,137,344],[254,325,233,328],[272,287,278,298],[304,247,312,264],[346,206,350,215],[400,174,394,200],[464,227,447,231],[453,309,464,334],[503,265,503,270],[571,292,572,298],[516,338,532,340],[612,340,601,344],[636,230,641,279],[657,259,655,264],[739,162,742,172],[757,85,757,90],[796,320,779,350],[712,348,711,352],[855,267,867,273],[885,238,884,249],[926,322,943,357],[914,349,915,355],[818,352,821,356]])
line(svg, 95, 2, 965, 2, "#999", 3)
line(svg, 93, 4, 970, 4, "#999", 1)
line(svg, 92, 4, 92, 365, "black", 2)
line(svg, 93, 367, 970, 367, "#777", 2)
line(svg, 868, 4, 868, 361, "#777", 1, "4 2")
yAxis(svg, 92, ["1.000e+06", "8.000e+05", "6.000e+05", "4.000e+05", "2.000e+05", "0.000e+00"], 36, 63.8, 4, [5, 20])
xAxis(svg, 367, 97, 970, 35.7, i => i % 4 == 2, 12, 8)
;["600", "800", "1000", "1200", "1400", "1600"].forEach((t, i) => text(svg, 168 + i * 143, 395, t, "tick", null, "middle"))
text(svg, 525, 389, "m/z", "tick", null, "middle").style.fill = navy
side(svg, 12, 179, navy)
text(svg, 100, 27, "Time range [9.50 - 10.40]", "note")
text(svg, 346, 63, "E", "big")

// deconvolved mass plot, every envelope is a bell: centre, height, width
svg = document.querySelector("#deconv")
let bells = [[385,204,7],[435,11,14],[477,13,9],[535,31,8],[583,7,15],[681,13,7],[740,4,12],[341,4,8],[365,5,8],[835,6,14],[888,276,8],[935,15,11],[981,19,8],[1035,43,7],[1085,9,16],[1130,5,8],[1184,19,7],[1245,3,16],[1330,5,7]]
let d = "M105 362"
for (let i = 0; i * 1.25 < 1460; i++) {
    let x = 105 + i * 1.25
    let h = 1 + rnd()
    bells.forEach(b => h += b[1] * Math.exp(-((x - b[0]) ** 2) / (2 * b[2] ** 2)))
    if (i % 2) h = h * (h > 60 ? 0.18 : 0.3)
    d += `L${x} ${Math.round(363 - h)}`
}
add(svg, "path", { d: d, fill: "none", stroke: "#111", "stroke-width": 1.3 })
;[[526,264,535,331],[724,164,679,348],[1054,284,1036,319],[1186,319,1181,343],[583,350,582,354],[1073,349,1073,354]].forEach(l => line(svg, l[0], l[1], l[2], l[3], "#f01e1e", 1))
;[[368,357],[415,350],[460,357],[518,356],[560,358],[609,360],[665,360],[870,353],[964,355],[1016,358],[1163,359]].forEach(p => add(svg, "path", { d: `M${p[0]} ${p[1] - 6}l5 6-5 6-5-6z`, fill: "#ffa50a" }))
add(svg, "circle", { cx: 385, cy: 154, r: 6, fill: "#ff7f27", stroke: "#222", "stroke-width": 1.5 })
add(svg, "circle", { cx: 888, cy: 81, r: 6, fill: "#0b97d3", stroke: "#222", "stroke-width": 1.5 })
text(svg, 193, 110, "CD3_VL 4-118(G.GVDDIQLT⋯)", "name")
text(svg, 356, 138, "12613.0", "name")
text(svg, 568, 134, "CD3_VL 2-118(GGGVDDIQLT⋯)", "name")
text(svg, 675, 160, "12730.0", "name")
text(svg, 407, 250, "CD3_VL 3-118(S.GGVDDIQL⋯)", "name")
text(svg, 568, 273, "12672.0", "name")
text(svg, 548, 344, "12690.9", "name")
text(svg, 805, 35, "CD3_VL, Reference", "name")
text(svg, 857, 62, "12814.0", "name")
text(svg, 989, 251, "CD3_VL, G(1)", "name")
text(svg, 1017, 278, "12873.1", "name")
text(svg, 1121, 284, "CD3_VL, G(2)", "name")
text(svg, 1149, 312, "12931.1", "name")
line(svg, 100, 2, 1566, 2, "#bbb", 2)
line(svg, 102, 2, 102, 366, "#999", 1)
line(svg, 100, 4, 100, 366, "black", 2)
line(svg, 103, 368, 1566, 368, "#777", 2)
yAxis(svg, 100, ["5.000e+06", "4.000e+06", "3.000e+06", "2.000e+06", "1.000e+06", "0.000e+00"], 8, 71, 5, [])
xAxis(svg, 368, 105, 1566, 49.9, i => i % 5 == 0, 12, 7)
;["12500", "12600", "12700", "12800", "12900", "13000"].forEach((t, i) => text(svg, 105 + i * 249.6, 396, t, "tick", null, "middle"))
text(svg, 730, 389, "M", "tick", null, "middle").style.fill = navy
side(svg, 19, 186, navy)
text(svg, 105, 23, "M[12000-15000] m/z[500-2000]", "note")
text(svg, 1434, 88, "F", "big")
```
